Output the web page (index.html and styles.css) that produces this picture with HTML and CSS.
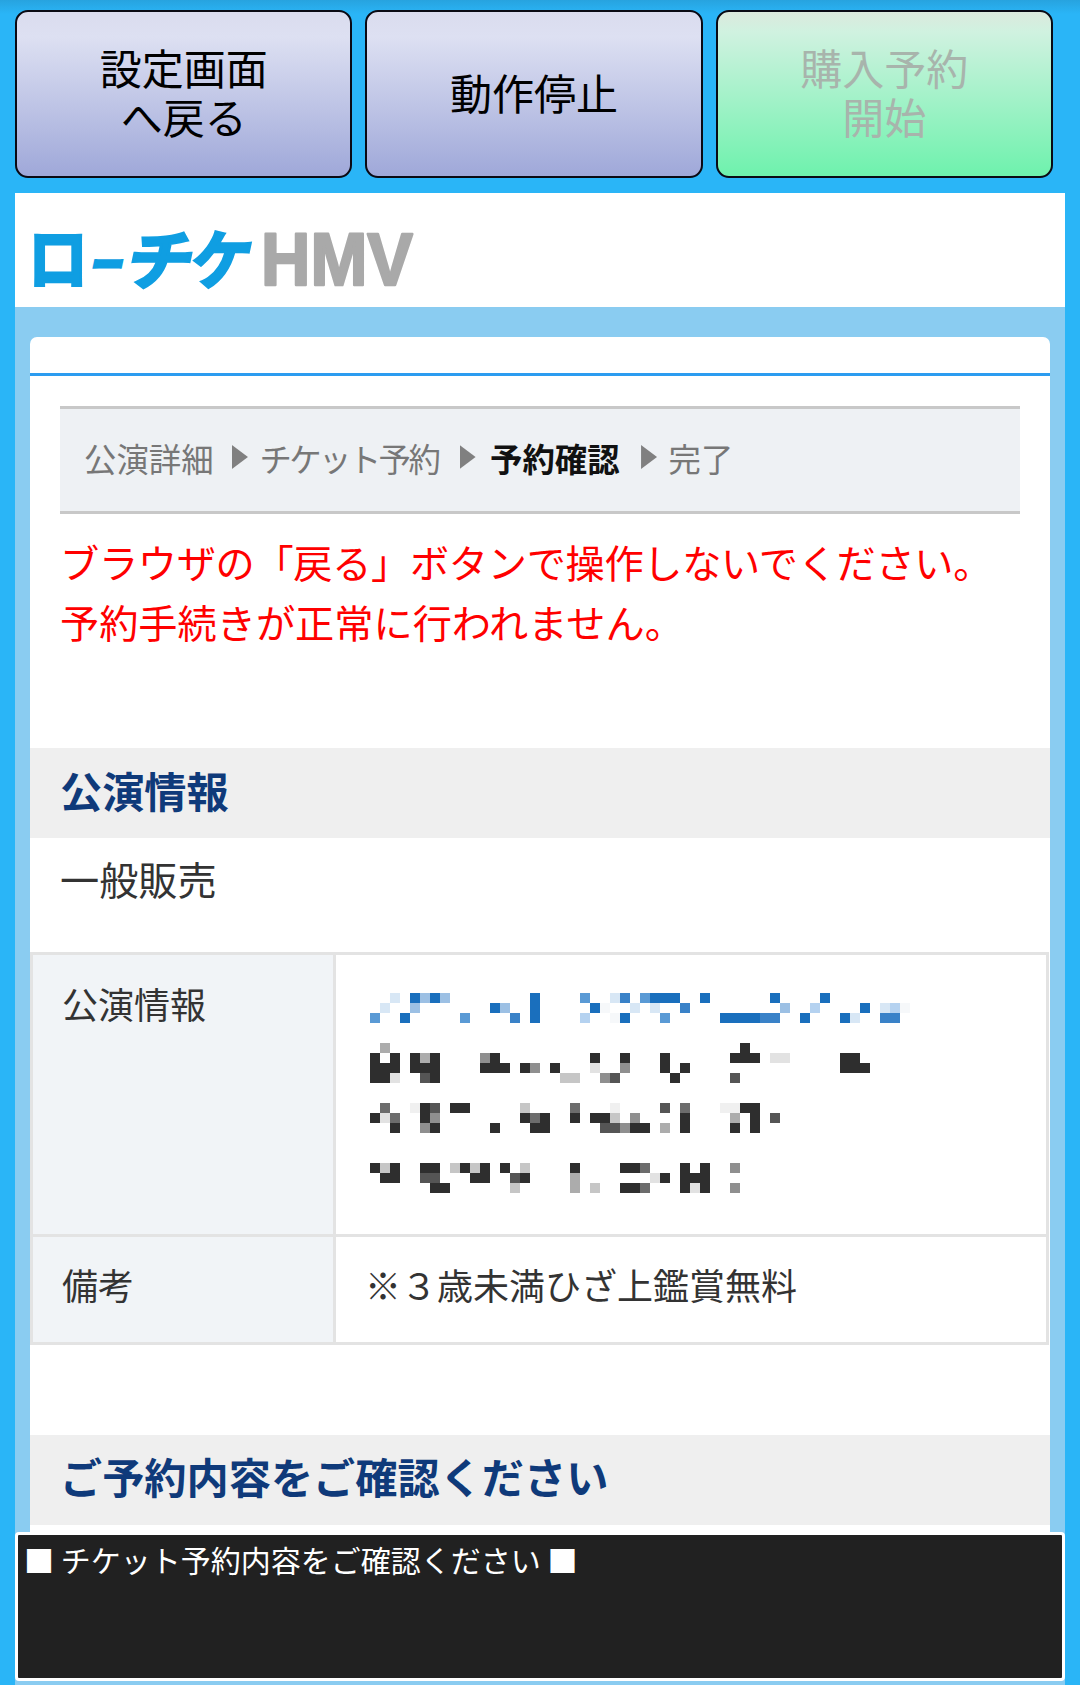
FILE: index.html
```html
<!DOCTYPE html>
<html lang="ja">
<head>
<meta charset="utf-8">
<title>ローチケHMV</title>
<link rel="stylesheet" href="styles.css">
</head>
<body>
<div class="toolbar">
  <button class="btn btn-blue">設定画面<br>へ戻る</button>
  <button class="btn btn-blue">動作停止</button>
  <button class="btn btn-green" disabled>購入予約<br>開始</button>
</div>
<div class="page">
  <header class="site-head">
    <svg class="logo" width="400" height="70" viewBox="0 0 400 70">
      <g class="logo-blue">
        <text x="13" y="60" font-size="68" textLength="60" lengthAdjust="spacingAndGlyphs">ロ</text>
        <g transform="skewX(-12)">
          <text x="85" y="56" font-size="42" textLength="33" lengthAdjust="spacingAndGlyphs">ー</text>
          <text x="121" y="60" font-size="64" textLength="66" lengthAdjust="spacingAndGlyphs">チ</text>
          <text x="185" y="60" font-size="64" textLength="59" lengthAdjust="spacingAndGlyphs">ケ</text>
        </g>
      </g>
      <text class="logo-gray" x="246" y="61" font-size="74" textLength="152" lengthAdjust="spacingAndGlyphs">HMV</text>
    </svg>
  </header>
  <main class="backdrop">
    <div class="card">
      <div class="card-top"></div>
      <nav class="steps">
        <span>公演詳細</span><i class="arrow"></i><span class="kana">チケット予約</span><i class="arrow"></i><b>予約確認</b><i class="arrow"></i><span>完了</span>
      </nav>
      <p class="warning"><span class="tight">ブラウザの「戻る」ボタンで操作しないでください。</span><br>予約手続きが正常に行われません。</p>
      <h2 class="section-title first">公演情報</h2>
      <p class="sale-type">一般販売</p>
      <table class="info">
        <tr class="row-main">
          <th>公演情報</th>
          <td class="blurred">
            <svg class="mosaic" width="540" height="200" viewBox="0 0 540 200" fill="none" stroke-width="10">
              <path stroke="#1a6fbd" d="M40 5h10M60 5h10M160 5h10M280 5h30M330 5h10M400 5h10M450 5h10M120 15h10M160 15h10M220 15h10M490 15h10M30 25h10M160 25h10M250 25h10M350 25h40M430 25h10M470 25h10"/>
              <path stroke="#3a82c8" d="M250 5h10M310 15h10M140 25h10M390 25h20M510 25h20"/>
              <path stroke="#5a9ad5" d="M210 5h10M270 5h10M0 25h10M90 25h10M290 25h10"/>
              <path stroke="#9cc0e4" d="M50 5h10M70 5h10M40 15h10M130 15h10M410 15h10"/>
              <path stroke="#b5d2f0" d="M440 15h10M520 15h10M210 25h10"/>
              <path stroke="#d8e7f5" d="M20 5h10M240 5h10M10 15h10M260 15h10M280 15h10M510 15h10M480 25h10"/>
              <path stroke="#f6f8fa" d="M230 15h10M240 25h10M530 15h10"/>

              <path stroke="#2e2e2e" d="M370 55h10M0 65h10M20 65h10M40 65h10M60 65h10M120 65h10M220 65h10M250 65h10M290 65h10M360 65h30M470 65h20M0 75h30M40 75h30M110 75h30M150 75h10M180 75h10M290 75h10M310 75h10M470 75h30M0 85h20M60 85h10M300 85h10M50 115h10M80 115h20M370 115h20M0 125h10M50 125h10M150 125h10M170 125h10M200 125h10M220 125h20M310 125h10M380 125h10M20 135h10M60 135h10M120 135h10M160 135h20M260 135h20M310 135h10M360 135h10M380 135h10M0 175h10M20 175h10M50 175h20M90 175h10M110 175h10M130 175h10M200 175h10M250 175h20M310 175h10M330 175h10M10 185h20M100 185h20M150 185h10M290 185h10M310 185h30M60 195h20M250 195h20M310 195h10M330 195h10"/>
              <path stroke="#555" d="M50 85h10M240 85h10M360 85h10M60 115h10M290 115h10M400 125h10M230 135h20M50 185h20M140 185h10"/>
              <path stroke="#6c6c6c" d="M10 115h10M200 115h10M310 115h10M20 125h10M160 125h10M270 175h10M270 195h10"/>
              <path stroke="#8f8f8f" d="M110 65h10M160 75h10M250 75h10M230 85h10M60 125h10M260 125h10M50 135h10M250 135h10M360 175h10M360 195h10"/>
              <path stroke="#acacac" d="M10 55h10M50 65h10M360 125h10M290 135h10M200 185h10M200 195h10"/>
              <path stroke="#c6c6c6" d="M190 85h20M150 115h10M240 125h10M10 175h10M80 175h10M100 175h10M150 175h10M140 195h10M220 195h10"/>
              <path stroke="#e2e2e2" d="M400 65h20M220 75h10M20 85h10M10 125h10M280 185h10M320 195h10"/>
              <path stroke="#f0f0f0" d="M40 115h10M240 115h10M350 115h20"/>
            </svg>
          </td>
        </tr>
        <tr class="row-note">
          <th>備考</th>
          <td class="note">※３歳未満ひざ上鑑賞無料</td>
        </tr>
      </table>
      <h2 class="section-title second">ご予約内容をご確認ください</h2>
    </div>
  </main>
</div>
<div class="console">■ チケット予約内容をご確認ください ■</div>
</body>
</html>
```
FILE: styles.css
```css
* { box-sizing: border-box; }
html, body { margin: 0; padding: 0; }
body {
  width: 1080px;
  height: 1685px;
  overflow: hidden;
  background: #2ab5f7;
  font-family: "Noto Sans CJK JP", "Noto Sans", sans-serif;
  color: #333;
}
.toolbar {
  display: flex;
  gap: 13px;
  height: 193px;
  padding: 10px 27px 15px 15px;
  background: linear-gradient(#27a3df 0, #2ab5f7 14px);
}
.btn {
  flex: 1 1 0;
  min-width: 0;
  padding: 0 0 6px;
  border: 2px solid #0a0a14;
  border-radius: 13px;
  font-family: inherit;
  font-size: 42px;
  line-height: 49px;
  color: #000;
}
.btn-blue { background: linear-gradient(#dadcee 0, #dde0f2 15%, #9fa8d9 100%); }
.btn-green {
  background: linear-gradient(#dbe9dd 0, #d0f2e0 12%, #6ef2ad 100%);
  color: #a8b4ac;
}
.page { margin: 0 15px; }
.site-head { height: 114px; background: #fff; padding-top: 31px; }
.logo { display: block; overflow: visible; }
.logo-blue text {
  fill: #0f9ee2;
  stroke: #0f9ee2;
  stroke-width: 3px;
  font-weight: 700;
  font-family: "Noto Sans CJK JP", sans-serif;
}
.logo-gray {
  fill: #a9a9a9;
  stroke: #a9a9a9;
  stroke-width: 2.5px;
  stroke-linejoin: round;
  font-weight: 700;
  font-family: "Liberation Sans", sans-serif;
}
.backdrop { background: #8accf1; padding: 30px 15px 0; height: 1400px; }
.card { background: #fff; border-radius: 7px 7px 0 0; height: 1300px; }
.card-top { height: 39px; border-bottom: 3px solid #2c9cf0; }
.steps {
  display: flex;
  align-items: center;
  height: 108px;
  margin: 30px 30px 0;
  padding: 0 0 6px 24px;
  background: #eef1f4;
  border-top: 3px solid #c8c8c8;
  border-bottom: 3px solid #c8c8c8;
  font-size: 32.4px;
  color: #777;
}
.steps b { color: #111; font-weight: 700; margin: 0 3px; }
.kana { letter-spacing: -2.6px; margin-right: 3px; }
.arrow {
  width: 16px;
  height: 24px;
  margin: 0 11.5px 0 18.4px;
  background: #808080;
  clip-path: polygon(0 0, 100% 50%, 0 100%);
}
.warning {
  margin: 17px 0 0 30px;
  font-size: 39.2px;
  line-height: 60px;
  color: #f00;
  height: 217px;
  white-space: nowrap;
}
.tight { letter-spacing: -0.3px; }
.section-title {
  margin: 0;
  padding-left: 30px;
  background: #efefef;
  color: #0f3a7a;
  font-size: 42.2px;
  font-weight: 700;
}
.section-title.first { height: 90px; line-height: 84px; }
.section-title.second { height: 90px; line-height: 82px; margin-top: 90px; }
.sale-type {
  margin: 0;
  padding-left: 30px;
  height: 114px;
  font-size: 39.2px;
  line-height: 80px;
}
.info {
  width: 1019px;
  table-layout: fixed;
  border-collapse: separate;
  border-spacing: 0;
  border-top: 3px solid #e3e3e3;
  border-left: 3px solid #e3e3e3;
  font-size: 36px;
}
.info th, .info td {
  padding: 0;
  border-right: 3px solid #e3e3e3;
  border-bottom: 3px solid #e3e3e3;
  vertical-align: top;
  font-weight: 400;
}
.info th {
  width: 303px;
  background: #f1f4f7;
  text-align: left;
  padding-left: 29px;
}
.row-main th { height: 282px; padding-top: 23px; line-height: 50px; }
.row-main td { padding: 38px 0 0 34px; }
.row-note th, .row-note td { height: 108px; line-height: 94px; }
.row-note td { padding-left: 29px; }
.mosaic { display: block; shape-rendering: crispEdges; overflow: hidden; }
.console {
  position: fixed;
  left: 15px;
  bottom: 4px;
  width: 1050px;
  height: 149px;
  padding: 1px 6px;
  background: #212121;
  border: 3px solid #fff;
  border-radius: 4px;
  color: #fff;
  font-size: 30px;
  line-height: 46px;
}
```
